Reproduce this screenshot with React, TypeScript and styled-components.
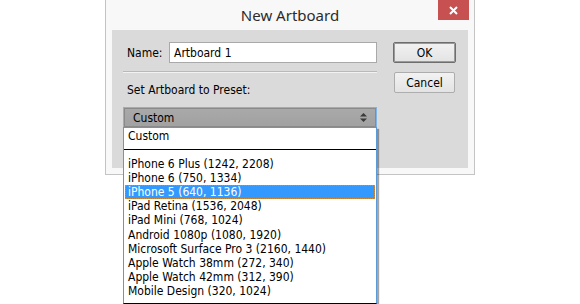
import React, { useState } from 'react';
import styled, { createGlobalStyle } from 'styled-components';

const GlobalStyle = createGlobalStyle`
  html, body {
    margin: 0;
    padding: 0;
    background: #ffffff;
  }
  body {
    font-family: 'DejaVu Sans Condensed', 'DejaVu Sans', sans-serif;
    font-size: 12px;
    color: #000;
  }
`;

const Page = styled.div`
  width: 580px;
  height: 304px;
  overflow: hidden;
  padding-left: 105px;
  box-sizing: border-box;
`;

const Window = styled.div`
  position: relative;
  width: 370px;
  height: 175px;
  box-sizing: border-box;
  background: #f8f8f8;
  border: 1px solid #c4c4c4;
  border-top: none;
  display: flex;
  flex-direction: column;
`;

const TitleBar = styled.div`
  height: 30px;
  display: flex;
  align-items: center;
  justify-content: center;
  position: relative;
  font-family: 'Noto Sans', 'Open Sans', sans-serif;
  font-size: 15px;
  color: #2b2b2b;
  padding-bottom: 1px;
  box-sizing: border-box;
`;

const CloseButton = styled.div`
  position: absolute;
  top: 0;
  right: 5px;
  width: 31px;
  height: 20px;
  background: #c75050;
  display: flex;
  align-items: center;
  justify-content: center;
`;

const Panel = styled.div`
  margin: 0 6px;
  height: 138px;
  background: #dadada;
  padding: 12px 10px 0 11px;
  box-sizing: border-box;
  display: flex;
  gap: 16px;
`;

const LeftCol = styled.div`
  width: 254px;
  display: flex;
  flex-direction: column;
`;

const RightCol = styled.div`
  display: flex;
  flex-direction: column;
  gap: 9px;
`;

const NameRow = styled.div`
  display: flex;
  align-items: center;
  height: 21px;
`;

const Label = styled.span`
  padding-left: 4px;
  width: 42px;
`;

const TextInput = styled.div`
  width: 208px;
  height: 21px;
  box-sizing: border-box;
  background: #fff;
  border: 1px solid #a9a9a9;
  padding: 0 4px;
  display: flex;
  align-items: center;
`;

const Separator = styled.div`
  height: 1px;
  background: #b9b9b9;
  border-bottom: 1px solid #f2f2f2;
  margin-top: 8px;
`;

const PresetLabel = styled.div`
  padding-left: 4px;
  margin-top: 10px;
  height: 14px;
  line-height: 14px;
`;

const SelectWrap = styled.div`
  position: relative;
  margin-top: 10px;
`;

const Trigger = styled.div`
  height: 21px;
  box-sizing: border-box;
  border: 1px solid #7eb4ea;
  background: linear-gradient(#a9a9a9, #a1a1a1);
  box-shadow: inset 0 0 0 1px #8a8a8a;
  padding: 0 9px;
  display: flex;
  align-items: center;
  justify-content: space-between;
`;

const DropList = styled.div`
  position: absolute;
  left: 0;
  top: 20px;
  width: 254px;
  box-sizing: border-box;
  background: #fff;
  border: 1px solid #5a9ad8;
  border-bottom: 1px solid #000;
  box-shadow: 2px 2px 1px rgba(0, 0, 0, 0.35);
  padding: 1px 1px 5px 1px;
  z-index: 5;
`;

const Item = styled.div<{ selected?: boolean }>`
  height: 14.1px;
  line-height: 14px;
  padding-left: 3px;
  white-space: nowrap;
  box-sizing: border-box;
  background: ${(p) => (p.selected ? '#3399ff' : 'transparent')};
  color: ${(p) => (p.selected ? '#fff' : '#000')};
  outline: ${(p) => (p.selected ? '1px dotted #d08a3a' : 'none')};
  outline-offset: -1px;
`;

const ListRule = styled.div`
  height: 1px;
  background: #000;
  margin: 6px -1px 7px -1px;
`;

const Button = styled.div<{ primary?: boolean }>`
  height: 21px;
  box-sizing: border-box;
  display: flex;
  align-items: center;
  justify-content: center;
  background: linear-gradient(#f2f2f2, #e3e3e3);
  border: 1px solid ${(p) => (p.primary ? '#6e6e6e' : '#adadad')};
  box-shadow: ${(p) => (p.primary ? 'inset 0 0 0 1px #9a9a9a' : 'none')};
  border-radius: 2px;
  margin-left: ${(p) => (p.primary ? '0' : '1px')};
  width: ${(p) => (p.primary ? '63px' : '61px')};
`;

const presets = [
  'iPhone 6 Plus (1242, 2208)',
  'iPhone 6 (750, 1334)',
  'iPhone 5 (640, 1136)',
  'iPad Retina (1536, 2048)',
  'iPad Mini (768, 1024)',
  'Android 1080p (1080, 1920)',
  'Microsoft Surface Pro 3 (2160, 1440)',
  'Apple Watch 38mm (272, 340)',
  'Apple Watch 42mm (312, 390)',
  'Mobile Design (320, 1024)',
];

const SortArrows = () => (
  <svg width="7" height="9" viewBox="0 0 7 9">
    <path d="M3.5 0 L7 3.5 H0 Z" fill="#3a3a3a" />
    <path d="M3.5 9 L7 5.5 H0 Z" fill="#3a3a3a" />
  </svg>
);

const CloseIcon = () => (
  <svg width="9" height="9" viewBox="0 0 9 9">
    <path d="M1 1 L8 8 M8 1 L1 8" stroke="#fff" strokeWidth="2" />
  </svg>
);

const App: React.FC = () => {
  const [selected] = useState('iPhone 5 (640, 1136)');

  return (
    <>
      <GlobalStyle />
      <Page>
        <Window>
          <TitleBar>
            New Artboard
            <CloseButton>
              <CloseIcon />
            </CloseButton>
          </TitleBar>
          <Panel>
            <LeftCol>
              <NameRow>
                <Label>Name:</Label>
                <TextInput>Artboard 1</TextInput>
              </NameRow>
              <Separator />
              <PresetLabel>Set Artboard to Preset:</PresetLabel>
              <SelectWrap>
                <Trigger>
                  <span>Custom</span>
                  <SortArrows />
                </Trigger>
                <DropList>
                  <Item>Custom</Item>
                  <ListRule />
                  {presets.map((p) => (
                    <Item key={p} selected={p === selected}>
                      {p}
                    </Item>
                  ))}
                </DropList>
              </SelectWrap>
            </LeftCol>
            <RightCol>
              <Button primary>OK</Button>
              <Button>Cancel</Button>
            </RightCol>
          </Panel>
        </Window>
      </Page>
    </>
  );
};

export default App;
